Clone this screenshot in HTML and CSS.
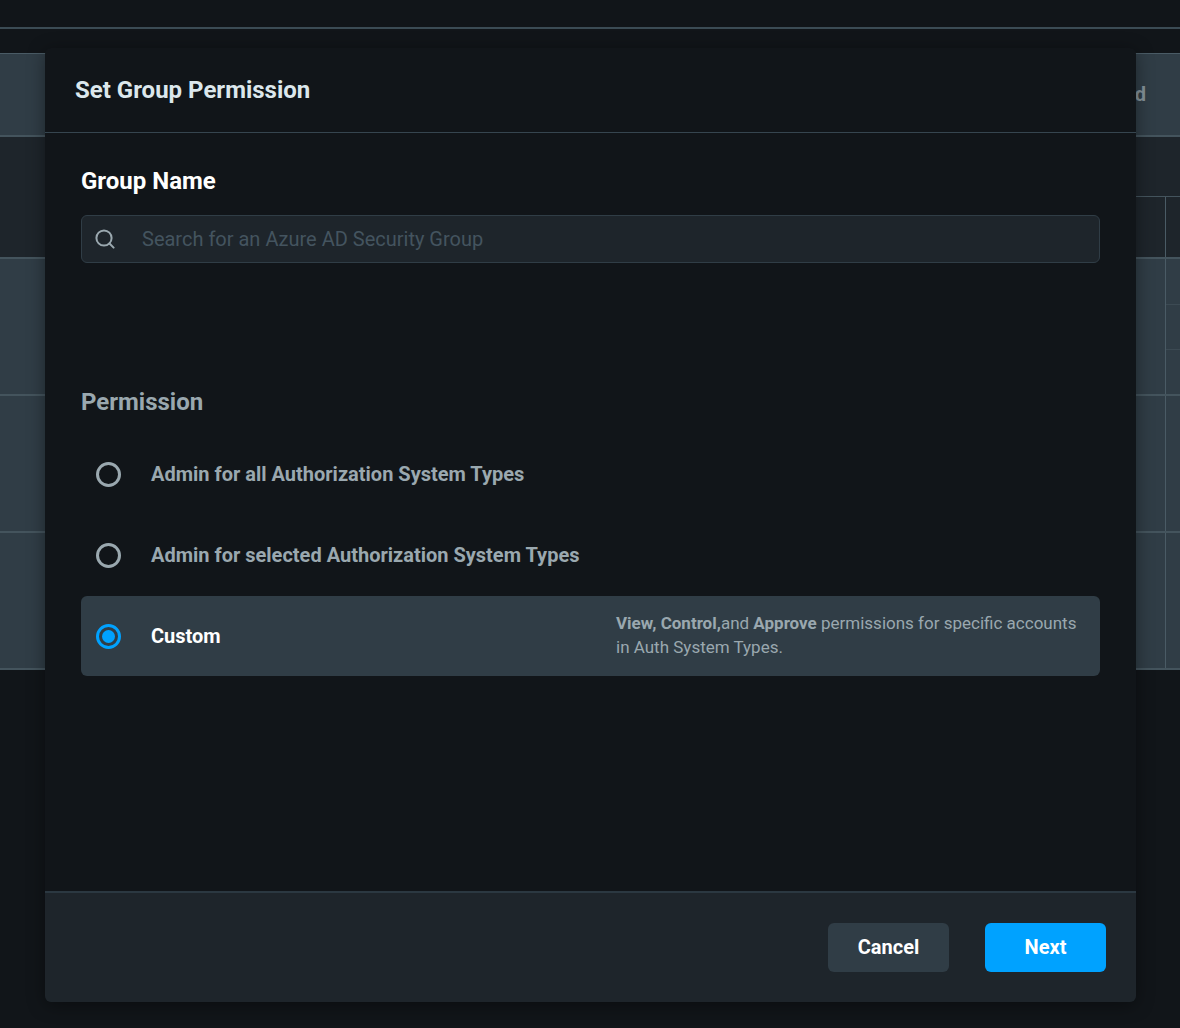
FILE: index.html
```html
<!DOCTYPE html>
<html lang="en">
<head>
<meta charset="utf-8">
<meta name="viewport" content="width=device-width, initial-scale=1">
<title>Set Group Permission</title>
<link rel="stylesheet" href="styles.css">
</head>
<body>
<div class="page">
  <div class="topbar"></div>
  <div class="grid">
    <div class="grid-title">d</div>
    <div class="grid-head">
      <div class="head-name"></div>
      <div class="head-group"></div>
      <div class="head-sub"></div>
      <div class="head-sub divided"></div>
    </div>
    <div class="grid-row">
      <div class="cell"></div>
      <div class="cell divided split"><span></span><span></span><span></span></div>
    </div>
    <div class="grid-row">
      <div class="cell"></div>
      <div class="cell divided"></div>
    </div>
    <div class="grid-row">
      <div class="cell"></div>
      <div class="cell divided"></div>
    </div>
  </div>
</div>

<div class="overlay">
  <form class="dialog" role="dialog" aria-labelledby="dialog-title">
    <header class="dialog-header">
      <h1 class="dialog-title" id="dialog-title">Set Group Permission</h1>
    </header>
    <main class="dialog-body">
      <section class="group">
        <label class="section-title strong" for="group-name">Group Name</label>
        <div class="search">
          <svg class="search-icon" viewBox="0 0 20 20" aria-hidden="true">
            <circle cx="9" cy="9" r="7.6"/>
            <path d="M14.5 14.5 18.6 18.6"/>
          </svg>
          <input class="search-input" id="group-name" type="text" placeholder="Search for an Azure AD Security Group">
        </div>
      </section>
      <fieldset class="permission">
        <legend class="section-title">Permission</legend>
        <div class="options">
          <label class="option">
            <input class="radio" type="radio" name="permission">
            <span class="option-name">Admin for all Authorization System Types</span>
          </label>
          <label class="option">
            <input class="radio" type="radio" name="permission">
            <span class="option-name">Admin for selected Authorization System Types</span>
          </label>
          <label class="option selected">
            <input class="radio" type="radio" name="permission" checked>
            <span class="option-name">Custom</span>
            <span class="option-note"><b>View, Control,</b>and <b>Approve</b> permissions for specific accounts in Auth System Types.</span>
          </label>
        </div>
      </fieldset>
    </main>
    <footer class="dialog-footer">
      <button class="button" type="button">Cancel</button>
      <button class="button primary" type="submit">Next</button>
    </footer>
  </form>
</div>
</body>
</html>
```

FILE: styles.css
```css
* {
  box-sizing: border-box;
}

body {
  margin: 0;
  background: #111519;
  color: #9aa8af;
  font-family: Roboto, "Liberation Sans", sans-serif;
  font-size: 20px;
}

.page {
  min-height: 100vh;
}

/* Table behind the dialog */
.topbar {
  height: 29px;
  border-bottom: 2px solid #3b4b54;
}

.grid {
  margin-top: 24px;
  border-top: 1px solid #4a5b65;
  background: #303d46;
}

.grid-title {
  padding: 28px 34px 29px;
  border-bottom: 2px solid #44545d;
  line-height: 24px;
  font-weight: 700;
  text-align: right;
  color: #84929a;
}

.grid-head {
  display: grid;
  grid-template-columns: 50% 1fr 15px;
  grid-template-rows: 60px 60px;
  border-bottom: 2px solid #44545d;
  background: #1e252b;
}

.head-name {
  grid-row: span 2;
}

.head-group {
  grid-column: span 2;
  border-bottom: 1px solid #44545d;
}

.divided {
  border-left: 1px solid #4a5b65;
}

.grid-row {
  display: grid;
  grid-template-columns: 1fr 15px;
  min-height: 137px;
  border-bottom: 2px solid #44545d;
}

.split {
  display: grid;
  grid-template-rows: 1fr 1fr 1fr;
}

.split span + span {
  border-top: 1px solid #3c4a53;
}

/* Dialog */
.overlay {
  position: absolute;
  inset: 0;
  display: flex;
  min-height: 100vh;
  padding: 48px 44px 26px 45px;
}

.dialog {
  display: flex;
  flex: 1;
  flex-direction: column;
  border-radius: 6px;
  background: #111519;
  box-shadow: 0 3px 18px rgba(0, 0, 0, 0.4);
}

.dialog-header {
  padding: 28px 30px;
  border-bottom: 1px solid #36454f;
}

.dialog-title,
.section-title {
  margin: 0;
  padding: 0;
  font-size: 24px;
  line-height: 28px;
  font-weight: 700;
}

.dialog-title {
  color: #dce7ec;
}

.dialog-body {
  display: flex;
  flex: 1;
  flex-direction: column;
  gap: 125px;
  padding: 34px 36px;
}

.group {
  display: flex;
  flex-direction: column;
  gap: 20px;
}

.strong {
  color: #ffffff;
}

.search {
  display: flex;
  align-items: center;
  gap: 27px;
  height: 48px;
  padding: 0 13px;
  border: 1px solid #303d46;
  border-radius: 6px;
  background: #1e252b;
}

.search-icon {
  flex: none;
  width: 20px;
  height: 20px;
  fill: none;
  stroke: #9aa8af;
  stroke-width: 2;
  stroke-linecap: round;
}

.search-input {
  flex: 1;
  min-width: 0;
  padding: 0;
  border: 0;
  outline: 0;
  background: transparent;
  color: #ffffff;
  font: inherit;
}

.search-input::placeholder {
  color: #44545f;
  opacity: 1;
}

.permission {
  min-width: 0;
  margin: 0;
  padding: 0;
  border: 0;
}

.options {
  display: flex;
  flex-direction: column;
  gap: 1px;
  padding-top: 18px;
}

.option {
  display: flex;
  align-items: center;
  gap: 30px;
  min-height: 80px;
  padding: 0 15px;
  border-radius: 6px;
}

.selected {
  background: #303d46;
}

.radio {
  appearance: none;
  display: grid;
  flex: none;
  place-items: center;
  width: 25px;
  height: 25px;
  margin: 0;
  border: 3px solid #9aa8af;
  border-radius: 50%;
}

.radio:checked {
  border-color: #00a2ff;
}

.radio:checked::before {
  content: "";
  width: 13px;
  height: 13px;
  border-radius: 50%;
  background: #00a2ff;
}

.option-name {
  flex: 1;
  line-height: 24px;
  font-weight: 700;
}

.selected .option-name {
  color: #ffffff;
}

.option-note {
  flex: none;
  width: 469px;
  padding-bottom: 2px;
  font-size: 17px;
  line-height: 24px;
}

.dialog-footer {
  display: flex;
  justify-content: flex-end;
  gap: 36px;
  padding: 30px;
  border-top: 2px solid #2b3841;
  border-radius: 0 0 6px 6px;
  background: #1e252b;
}

.button {
  width: 121px;
  height: 49px;
  padding: 0 0 2px;
  border: 0;
  border-radius: 6px;
  background: #303d46;
  color: #ffffff;
  font: inherit;
  font-weight: 700;
}

.primary {
  background: #00a2ff;
}
```
